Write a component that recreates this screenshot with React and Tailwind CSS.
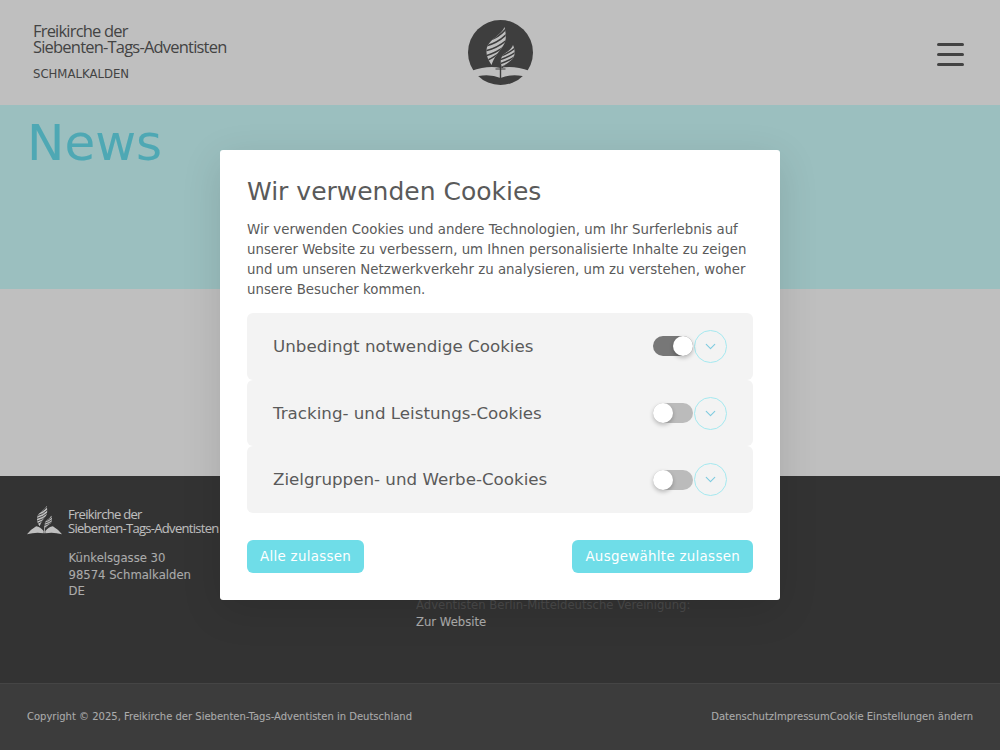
import { ChevronDown } from "lucide-react";

function Flames({ stripe }) {
  return (
    <>
      <defs>
        <clipPath id={`big-${stripe}`}>
          <path d="M36.5 7C38 14 39 20 35 26C31 32 26 37 23.5 45C20 40 18 35 18.5 30C19 24 24 20 29 16C32 13.5 35 11 36.5 7Z" />
        </clipPath>
        <clipPath id={`small-${stripe}`}>
          <path d="M45 25C47 30 47.5 35 44.5 39C41 43 36.5 44 34.5 49C32.5 45 32 40 34 36.5C36 33 43 31 45 25Z" />
        </clipPath>
      </defs>
      <g clipPath={`url(#big-${stripe})`}>
        <rect x="14" y="4" width="28" height="42" fill="#fff" />
        <g stroke={stripe} strokeWidth="1.6" fill="none">
          <path d="M22 20Q31 17 38 9" />
          <path d="M18 26Q30 23 39 14" />
          <path d="M17 31Q30 28 40 19" />
          <path d="M17 36Q29 33 40 24" />
          <path d="M18 41Q27 37 38 28" />
        </g>
      </g>
      <g clipPath={`url(#small-${stripe})`}>
        <rect x="30" y="22" width="20" height="28" fill="#fff" />
        <g stroke={stripe} strokeWidth="1.5" fill="none">
          <path d="M33 36Q41 33 47 28" />
          <path d="M31 40Q41 37 48 32" />
          <path d="M31 44Q41 41 48 36" />
          <path d="M33 48Q40 44 47 40" />
        </g>
      </g>
    </>
  );
}

function HeaderLogo() {
  return (
    <svg viewBox="0 0 65 65" className="w-[65px] h-[65px]">
      <circle cx="32.5" cy="32.5" r="32.5" fill="#535353" />
      <path d="M3 51Q20 45 32.5 48Q45 45 62 51L66 59L54.5 56Q42 54 32.5 58Q23 54 10.5 56L-1 59Z" fill="#fff" />
      <Flames stripe="#535353" />
      <path d="M31.8 44V58H33.2V44ZM27.5 48.4V49.6H37.5V48.4Z" fill="#535353" />
    </svg>
  );
}

function FooterLogo() {
  return (
    <svg viewBox="0 0 65 65" className="w-[35px] h-[35px]">
      <Flames stripe="#454545" />
      <path d="M31.8 44V58H33.2V44Z" fill="#fff" />
      <path d="M0 60Q8 50 17 45Q25 46 31 54V58Q16 55 0 60ZM65 60Q57 50 48 45Q40 46 34 54V58Q49 55 65 60Z" fill="#fff" />
    </svg>
  );
}

function CookieRow({ label, on }) {
  return (
    <div className="flex items-center justify-between h-[66.7px] px-[26px] bg-[#f3f3f3] rounded-md">
      <span className="text-[16.7px] text-[#5a5a5a]">{label}</span>
      <div className="flex items-center">
        <div className={`relative w-[40px] h-[20px] rounded-full ${on ? "bg-[#777]" : "bg-[#bbb]"}`}>
          <div className={`absolute top-0 w-[20px] h-[20px] rounded-full bg-white shadow-[0_2px_4px_rgba(0,0,0,0.25)] ${on ? "right-0" : "left-0"}`} />
        </div>
        <div className="w-[33px] h-[33px] ml-px rounded-full border border-[#a5e9f0] flex items-center justify-center">
          <ChevronDown className="w-[17px] h-[17px] text-[#7fcbe0]" strokeWidth={1.6} />
        </div>
      </div>
    </div>
  );
}

export default function App() {
  return (
    <div className="relative h-[750px] overflow-hidden bg-white font-['DejaVu_Sans',sans-serif]">
      {/* Header */}
      <header className="h-[105px] grid grid-cols-[1fr_auto_1fr] items-center px-[33px]">
        <div className="text-[#5a5a5a] font-['Open_Sans',sans-serif]">
          <div className="-mt-[1px] text-[16.5px] leading-[16.5px] tracking-[-0.8px] whitespace-nowrap">
            Freikirche der
            <br />
            Siebenten-Tags-Adventisten
          </div>
          <div className="mt-[10px] text-[11.7px] leading-[16px] font-['DejaVu_Sans',sans-serif]">SCHMALKALDEN</div>
        </div>
        <HeaderLogo />
        <div className="justify-self-end w-[27px] mr-[3px] mt-[3px] flex flex-col gap-[7px]">
          <div className="h-[3px] bg-[#5a5a5a] rounded-sm" />
          <div className="h-[3px] bg-[#5a5a5a] rounded-sm" />
          <div className="h-[3px] bg-[#5a5a5a] rounded-sm" />
        </div>
      </header>

      {/* Hero */}
      <section className="h-[184px] px-[27px] pt-[9px] bg-[#cfffff]">
        <h1 className="text-[50px] leading-[58px] text-[#69e1f0]">News</h1>
      </section>

      <main className="h-[187px]" />

      {/* Footer */}
      <footer className="h-[207px] bg-[#454545] px-[27px] pt-[26px] grid grid-cols-[389px_1fr] text-[11.65px] leading-[16.7px] text-[#e6e6e6]">
        <div>
          <div className="flex items-center gap-[6px]">
            <FooterLogo />
            <div className="pt-[3px] font-['Open_Sans',sans-serif] text-[13px] leading-[14px] tracking-[-0.7px] text-white whitespace-nowrap">
              Freikirche der
              <br />
              Siebenten-Tags-Adventisten
            </div>
          </div>
          <div className="mt-[13px] ml-[41.5px]">
            Künkelsgasse 30
            <br />
            98574 Schmalkalden
            <br />
            DE
          </div>
        </div>
        <div className="pt-[95px]">
          <div className="whitespace-nowrap text-[#636363]">Adventisten Berlin-Mitteldeutsche Vereinigung:</div>
          <div>Zur Website</div>
        </div>
      </footer>
      <div className="h-[67px] pb-[1px] bg-[#505050] border-t border-[#5c5c5c] px-[27px] flex items-center justify-between text-[10px] text-[#e6e6e6]">
        <span>Copyright © 2025, Freikirche der Siebenten-Tags-Adventisten in Deutschland</span>
        <div className="flex">
          <span>Datenschutz</span>
          <span>Impressum</span>
          <span>Cookie Einstellungen ändern</span>
        </div>
      </div>

      {/* Cookie dialog */}
      <div className="absolute inset-0 bg-black/25 flex items-center justify-center">
        <div className="w-[560px] h-[450px] bg-white rounded-[3px] shadow-[0_10px_40px_rgba(0,0,0,0.12)] px-[27px] pt-[26px]">
          <h2 className="text-[25px] leading-[32px] text-[#5a5a5a]">Wir verwenden Cookies</h2>
          <p className="mt-[12px] text-[13.33px] leading-[20px] text-[#5a5a5a]">
            Wir verwenden Cookies und andere Technologien, um Ihr Surferlebnis auf unserer Website zu verbessern, um Ihnen personalisierte Inhalte zu zeigen und um unseren Netzwerkverkehr zu analysieren, um zu verstehen, woher unsere Besucher kommen.
          </p>
          <div className="mt-[13px] flex flex-col">
            <CookieRow label="Unbedingt notwendige Cookies" on />
            <CookieRow label="Tracking- und Leistungs-Cookies" />
            <CookieRow label="Zielgruppen- und Werbe-Cookies" />
          </div>
          <div className="mt-[27px] flex justify-between">
            <button className="h-[33px] px-[13px] rounded-md bg-[#6fdde8] text-white text-[13.4px] tracking-[0.3px]">Alle zulassen</button>
            <button className="h-[33px] px-[13px] rounded-md bg-[#6fdde8] text-white text-[13.4px] tracking-[0.3px]">Ausgewählte zulassen</button>
          </div>
        </div>
      </div>
    </div>
  );
}
